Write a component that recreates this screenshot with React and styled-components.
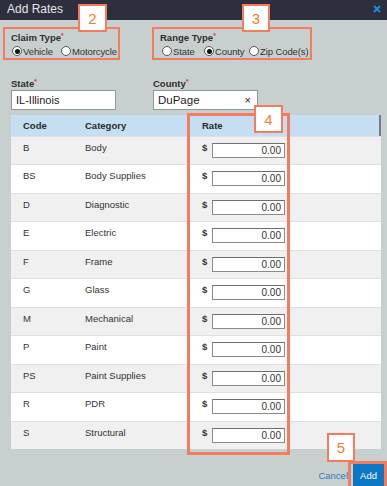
import React from "react";
import styled, { createGlobalStyle } from "styled-components";

const Global = createGlobalStyle`
  html, body { margin: 0; padding: 0; background: #c8d0cf; }
  body { font-family: "Liberation Sans", Arial, sans-serif; }
  * { box-sizing: border-box; }
`;

const Dialog = styled.div`
  position: relative;
  width: 387px;
  height: 486px;
  overflow: hidden;
  background: #c8d0cf;
  display: flex;
  flex-direction: column;
`;

const Header = styled.div`
  height: 21px;
  background: #2d303c;
  display: flex;
  align-items: center;
  justify-content: space-between;
  padding: 0 6px 2px 7px;
  color: #e6e6e6;
  font-size: 12px;
`;

const TopRow = styled.div`
  display: flex;
  margin-top: 7px;
  padding-left: 3px;
`;

const Group = styled.div`
  width: ${p => p.$w}px;
  height: 33px;
  margin-left: ${p => p.$ml || 0}px;
  border: 2px solid #f47b5e;
  padding: 3px 0 0 6px;
`;

const Label = styled.div`
  font-size: 9.5px;
  font-weight: bold;
  color: #2e2e2e;
  line-height: 11px;
  white-space: nowrap;
  sup { color: #e03a2a; font-size: 7px; vertical-align: top; line-height: 8px; }
`;

const Radios = styled.div`
  display: flex;
  align-items: center;
  margin-top: 2px;
  padding-left: ${p => p.$indent}px;
  height: 13px;
  white-space: nowrap;
`;

const RadioItem = styled.span`
  display: inline-flex;
  align-items: center;
  flex: none;
  width: ${p => (p.$w ? `${p.$w}px` : "auto")};
  font-size: 9.5px;
  color: #333;
  letter-spacing: -0.1px;
`;

const Circle = styled.span`
  flex: none;
  width: 10px;
  height: 10px;
  border-radius: 50%;
  border: 1px solid #555;
  background: #fff;
  display: inline-flex;
  align-items: center;
  justify-content: center;
  margin-right: 1px;
  &::after {
    content: "";
    width: 5px;
    height: 5px;
    border-radius: 50%;
    background: ${p => (p.$on ? "#111" : "transparent")};
  }
`;

const FieldsRow = styled.div`
  display: flex;
  margin-top: 18px;
  padding-left: 11px;
  gap: 37px;
`;

const Field = styled.div`
  display: flex;
  flex-direction: column;
  gap: 1px;
`;

const TextBox = styled.div`
  width: 105px;
  height: 20px;
  background: #fff;
  border: 1px solid #8f9696;
  display: flex;
  align-items: center;
  justify-content: space-between;
  padding: 0 6px 0 4px;
  font-size: ${p => p.$fs || 11}px;
  color: #222;
`;

const Clear = styled.span`
  font-size: 11px;
`;

const Table = styled.div`
  margin: 5px 0 0 11px;
  width: 370px;
  background: #fff;
`;

const HeadRow = styled.div`
  height: 21px;
  background: #c6def2;
  border-right: 2px solid #6e7f8c;
  display: grid;
  grid-template-columns: 62px 117px 1fr;
  align-items: center;
  padding-left: 12px;
  font-size: 9.5px;
  font-weight: bold;
  color: #2a2a2a;
`;

const Row = styled.div`
  height: 28.5px;
  display: grid;
  grid-template-columns: 62px 117px 10px 1fr;
  align-items: center;
  padding-left: 12px;
  font-size: 9.5px;
  color: #333;
  background: ${p => (p.$alt ? "#f0f0f0" : "#fff")};
  border-top: 1px solid #e0e0e0;
  &:first-of-type { border-top: none; }
`;

const Cell = styled.span`
  padding-bottom: 6px;
  font-weight: ${p => (p.$bold ? "bold" : "normal")};
`;

const RateInput = styled.div`
  width: 73px;
  height: 15px;
  background: #fff;
  border: 1px solid #8c8c8c;
  border-top-color: #6e6e6e;
  display: flex;
  align-items: center;
  justify-content: flex-end;
  padding-right: 3px;
  font-size: 10px;
  color: #333;
`;

const Footer = styled.div`
  display: flex;
  justify-content: flex-end;
  align-items: flex-start;
  margin-top: 14px;
  padding-right: 3px;
`;

const CancelLink = styled.span`
  font-size: 9.5px;
  color: #2f7bbd;
  margin: 7px 5px 0 0;
`;

const AddButton = styled.div`
  width: 31px;
  height: 23px;
  background: #0b77c5;
  color: #fff;
  font-size: 9.5px;
  display: flex;
  align-items: center;
  justify-content: center;
  padding-top: 1px;
`;

const Badge = styled.div`
  position: absolute;
  left: ${p => p.$x}px;
  top: ${p => p.$y}px;
  width: ${p => p.$w || 29}px;
  height: ${p => p.$h || 28}px;
  background: #fff;
  border: 2px solid #f47b5e;
  color: #ef7e34;
  font-size: 15px;
  display: flex;
  align-items: center;
  justify-content: center;
  z-index: 3;
`;

const Frame = styled.div`
  position: absolute;
  left: ${p => p.$x}px;
  top: ${p => p.$y}px;
  width: ${p => p.$w}px;
  height: ${p => p.$h}px;
  border: 3px solid #f47b5e;
  pointer-events: none;
  z-index: 2;
`;

const rows = [
  ["B", "Body"],
  ["BS", "Body Supplies"],
  ["D", "Diagnostic"],
  ["E", "Electric"],
  ["F", "Frame"],
  ["G", "Glass"],
  ["M", "Mechanical"],
  ["P", "Paint"],
  ["PS", "Paint Supplies"],
  ["R", "PDR"],
  ["S", "Structural"],
];

const Radio = ({ on, label, w }) => (
  <RadioItem $w={w}>
    <Circle $on={on} />
    {label}
  </RadioItem>
);

export default function App() {
  return (
    <>
      <Global />
      <Dialog>
        <Header>
          <span>Add Rates</span>
          <svg width="8" height="8" viewBox="0 0 8 8">
            <path d="M1 1L7 7M7 1L1 7" stroke="#1f8ad6" strokeWidth="2" />
          </svg>
        </Header>
        <TopRow>
          <Group $w={117}>
            <Label>Claim Type<sup>*</sup></Label>
            <Radios $indent={1}>
              <Radio on label="Vehicle" w={49} />
              <Radio label="Motorcycle" />
            </Radios>
          </Group>
          <Group $w={160} $ml={32}>
            <Label>Range Type<sup>*</sup></Label>
            <Radios $indent={2}>
              <Radio label="State" w={42} />
              <Radio on label="County" w={45} />
              <Radio label="Zip Code(s)" />
            </Radios>
          </Group>
        </TopRow>
        <FieldsRow>
          <Field>
            <Label>State<sup>*</sup></Label>
            <TextBox>IL-Illinois</TextBox>
          </Field>
          <Field>
            <Label>County<sup>*</sup></Label>
            <TextBox $fs={11.5}>
              DuPage<Clear>×</Clear>
            </TextBox>
          </Field>
        </FieldsRow>
        <Table>
          <HeadRow>
            <span>Code</span>
            <span>Category</span>
            <span>Rate</span>
          </HeadRow>
          {rows.map(([c, n], i) => (
            <Row key={c} $alt={i % 2 === 0}>
              <Cell>{c}</Cell>
              <Cell>{n}</Cell>
              <Cell $bold>$</Cell>
              <RateInput>0.00</RateInput>
            </Row>
          ))}
        </Table>
        <Footer>
          <CancelLink>Cancel</CancelLink>
          <AddButton>Add</AddButton>
        </Footer>

        <Badge $x={78} $y={4}>2</Badge>
        <Badge $x={242} $y={4} $w={28}>3</Badge>
        <Frame $x={187} $y={113} $w={103} $h={342} />
        <Badge $x={254} $y={105}>4</Badge>
        <Frame $x={348} $y={461} $w={39} $h={30} />
        <Badge $x={327} $y={433} $w={28} $h={29}>5</Badge>
      </Dialog>
    </>
  );
}
